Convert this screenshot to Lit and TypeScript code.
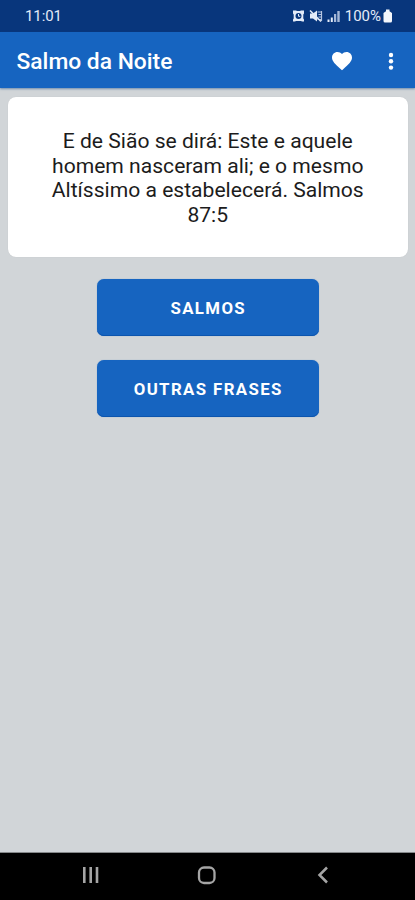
import { LitElement, html, css } from "lit";
import { customElement } from "lit/decorators.js";

@customElement("app-root")
export class AppRoot extends LitElement {
  static styles = css`
    :host {
      display: flex;
      flex-direction: column;
      height: 900px;
      width: 100%;
      overflow: hidden;
      background: #d1d5d8;
      font-family: Roboto, "Liberation Sans", sans-serif;
    }
    * { box-sizing: border-box; }
    svg { display: block; flex: none; }
    .status {
      flex: none;
      height: 32px;
      display: flex;
      align-items: center;
      padding: 0 22px 0 25px;
      background: #08367c;
      color: #e3ebf8;
      font-size: 15px;
      line-height: 18px;
    }
    .time { flex: 1; letter-spacing: -0.1px; }
    .battery { margin-left: 3px; margin-right: 1px; }
    .appbar {
      flex: none;
      height: 56px;
      display: flex;
      align-items: center;
      padding: 1px 20px 0 16.500px;
      background: #1664c0;
      color: #fff;
      box-shadow: 0 1px 2px rgba(30, 80, 140, 0.55);
    }
    .title {
      flex: 1;
      margin: 0;
      padding-top: 3px;
      font-size: 22.8px;
      line-height: 28px;
      font-weight: 500;
    }
    .more { margin-left: 33px; }
    main {
      flex: 1;
      display: flex;
      flex-direction: column;
      align-items: center;
      padding: 9px 7.5px 0 8px;
    }
    .card {
      width: 100%;
      height: 159.5px;
      margin-bottom: 22px;
      padding: 32.3px 40px 0;
      border-radius: 8px;
      background: #fff;
      box-shadow: 0 0 1px rgba(0, 0, 0, 0.12);
      color: #1c1c1c;
      text-align: center;
      font-size: 21.1px;
      line-height: 24.6px;
    }
    .card p { margin: 0; }
    .btn {
      width: 222px;
      height: 57px;
      margin: 0 0 24.3px;
      padding: 1px 0 0 1px;
      border: 0;
      border-radius: 7px;
      background: #1664c0;
      box-shadow: inset 0 -1px 0 #0c55ae, 0 0 1px rgba(22, 100, 192, 0.5);
      color: #fff;
      font: 700 16.8px/20px Roboto, "Liberation Sans", sans-serif;
      letter-spacing: 1.4px;
      text-transform: uppercase;
    }
    .nav {
      flex: none;
      height: 47.5px;
      display: flex;
      align-items: center;
      justify-content: space-between;
      padding: 0 86px 2px 82px;
      background: #000;
      box-shadow: 0 -1px 0 #85888a;
    }
    .home { margin-right: 4px; }
  `;

  render() {
    return html`
      <header class="status">
        <span class="time">11:01</span>
        <svg width="50" height="14" viewBox="0 0 50 14" fill="#e3ebf8">
          <path d="M1 1.500h3l1 .5h3l1-.5h3v3l-.700 1v4l.700 1v2h-2l-1-.5H4l-1 .5H1v-2l.700-1v-4L1 4.500z"/>
          <circle cx="6.500" cy="7" r="3" fill="#08367c"/>
          <path d="M6.500 5v2.300H8.300" fill="none" stroke="#e3ebf8"/>
          <path d="M18 4.500h3l4-3v11L21 9.500h-3z"/>
          <path d="M25.500 3h4M26.500 5.500h3M26.500 8h3M25.500 10.500h4M29.500 2v10" stroke="#b5c5e1" stroke-width="1.200" fill="none"/>
          <path d="M18 1.500l11 11" stroke="#e3ebf8" stroke-width="1.600"/>
          <path d="M35.500 10.500h2v2.500h-2zM38.800 8.500h2V13h-2z"/>
          <path d="M42 5h2.200v8H42zM45.300 2h2.400v11h-2.400z" fill="#a5b8d8"/>
        </svg>
        <span class="battery">100%</span>
        <svg width="11" height="14" viewBox="0 0 11 14" fill="#f4f7fc">
          <path d="M4 .5h3.500v1.700L10 4v8q0 1.500-1.500 1.500H3Q1.500 13.500 1.500 12V4L4 2.200z"/>
        </svg>
      </header>
      <div class="appbar">
        <h1 class="title">Salmo da Noite</h1>
        <svg width="24" height="24" viewBox="0 0 24 24" fill="#fff">
          <path d="M12 21.350l-1.450-1.320C5.400 15.360 2 12.280 2 8.500 2 5.420 4.420 3 7.500 3c1.740 0 3.410.810 4.500 2.090C13.090 3.810 14.760 3 16.500 3 19.580 3 22 5.420 22 8.500c0 3.780-3.400 6.860-8.550 11.540z"/>
        </svg>
        <svg class="more" width="8" height="20" viewBox="0 0 8 20" fill="#fff">
          <circle cx="4" cy="4" r="2.200"/><circle cx="4" cy="10.300" r="2.200"/><circle cx="4" cy="16.600" r="2.200"/>
        </svg>
      </div>
      <main>
        <section class="card">
          <p>E de Sião se dirá: Este e aquele<br>homem nasceram ali; e o mesmo<br>Altíssimo a estabelecerá. Salmos<br>87:5</p>
        </section>
        <button class="btn">Salmos</button>
        <button class="btn">Outras Frases</button>
      </main>
      <nav class="nav">
        <svg width="18" height="18" viewBox="0 0 18 18" stroke="#a5a5a5" stroke-width="2.600">
          <path d="M2.300 1v16M8.700 1v16M15 1v16"/>
        </svg>
        <svg class="home" width="20" height="20" viewBox="0 0 20 20" fill="none" stroke="#a5a5a5" stroke-width="2.300">
          <rect x="2" y="2.500" width="15.500" height="15.500" rx="5"/>
        </svg>
        <svg width="12" height="18" viewBox="0 0 12 18" fill="none" stroke="#a5a5a5" stroke-width="2.500">
          <path d="M10 1.500L2.500 9l7.500 7.500"/>
        </svg>
      </nav>
    `;
  }
}
